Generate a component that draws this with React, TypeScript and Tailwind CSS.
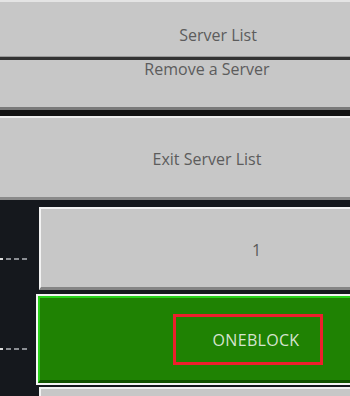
import React from 'react'

// ─── 左侧虚线标记 ─────────────────────────────────────────────────────────────

function Tick() {
  return (
    <div className="flex h-[2px] items-center gap-[3px]">
      <span className="h-[2px] w-[3px] bg-[#dcdcdc]" />
      <span className="h-[2px] w-[5px] bg-[#8c8f94]" />
      <span className="h-[2px] w-[5px] bg-[#8c8f94]" />
      <span className="h-[2px] w-[5px] bg-[#8c8f94]" />
    </div>
  )
}

export default function App() {
  const font = { fontFamily: '"Open Sans", "Noto Sans", sans-serif' }

  return (
    <div className="relative h-[396px] w-[350px] overflow-hidden bg-[#15181d]" style={font}>
      {/* 顶部菜单 */}
      <div className="w-[436px] border-t-2 border-[#e4e4e4] bg-[#c7c7c7]">
        <div className="flex h-[54px] items-end justify-center pb-[9px] text-[16px] text-[#5c5c5c]">Server List</div>
      </div>
      <div className="h-[1px] w-full bg-[#9a9a9a]" />
      <div className="h-[3px] w-full bg-[#333333]" />
      <div className="w-[414px] bg-[#c7c7c7]">
        <div className="flex h-[47px] items-start justify-center text-[16px] leading-[18px] text-[#5c5c5c]">Remove a Server</div>
      </div>
      <div className="h-[3px] w-full bg-[#7a7a7a]" />
      <div className="h-[6px] w-full bg-[#111111]" />
      <div className="h-[2px] w-full bg-[#ececec]" />
      <div className="w-[414px] bg-[#c7c7c7]">
        <div className="flex h-[79px] items-center justify-center pt-[3px] text-[16px] text-[#5c5c5c]">Exit Server List</div>
      </div>
      <div className="h-[3px] w-full bg-[#8a8a8a]" />

      {/* 服务器列表 */}
      <div className="flex">
        <div className="flex w-[36px] shrink-0 flex-col pt-[58px]">
          <Tick />
          <div className="mt-[88px]">
            <Tick />
          </div>
        </div>

        <div className="flex w-[436px] shrink-0 flex-col">
          <div className="mt-[7px] ml-[3px] border-t-2 border-l-2 border-b-[3px] border-t-[#f2f2f2] border-l-[#f2f2f2] border-b-[#858585] bg-[#c7c7c7]">
            <div className="flex h-[78px] items-center justify-center pt-[4px] text-[16px] text-[#5a5a5a]">1</div>
          </div>

          <div className="mt-[4px] border-2 border-[#f4f4f4]">
            <div className="border-t-2 border-l-2 border-b-[3px] border-t-[#2ad11b] border-l-[#2ad11b] border-b-[#115200] bg-[#1f8203]">
              <div className="flex h-[82px] items-center justify-center pr-[14px]">
                <div className="flex h-[51px] w-[150px] items-center justify-center border-[3px] border-[#ee1f2c] pt-[2px] pl-[16px] text-[16px] tracking-[0.3px] text-[#d6e4cf]">
                  ONEBLOCK
                </div>
              </div>
            </div>
          </div>

          <div className="mt-[2px] ml-[3px] h-[20px] border-t-2 border-l-2 border-[#f2f2f2] bg-[#c7c7c7]" />
        </div>
      </div>
    </div>
  )
}
